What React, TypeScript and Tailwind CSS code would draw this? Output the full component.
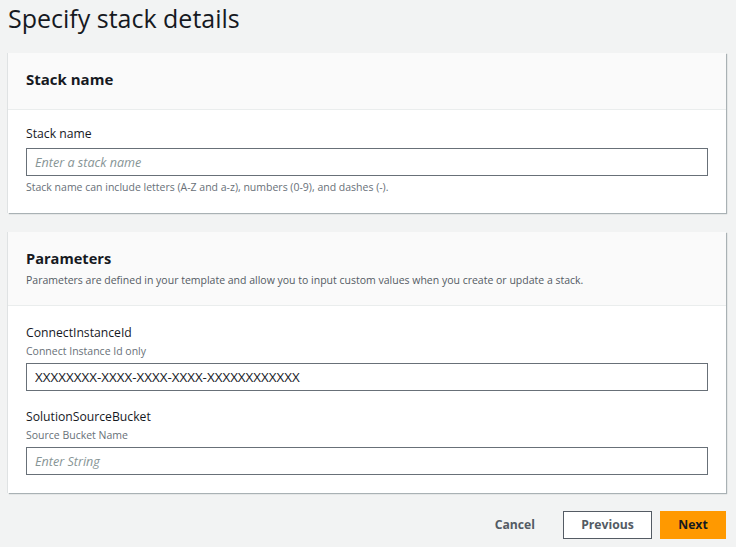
import React from 'react';

const font = { fontFamily: '"Open Sans", "Noto Sans", Arial, sans-serif' };

function Field({ label, hint, placeholder, value }: { label: string; hint?: string; placeholder?: string; value?: string }) {
  return (
    <div>
      <div className="text-[12.2px] leading-[20px] text-[#16191f]">{label}</div>
      {hint && <div className="text-[10.5px] leading-[16px] text-[#687078]">{hint}</div>}
      <input
        readOnly
        defaultValue={value}
        placeholder={placeholder}
        className="mt-[4px] block h-[28px] w-full border border-[#687078] bg-white px-[8px] text-[13.4px] text-[#16191f] outline-none placeholder:text-[12.6px] placeholder:italic placeholder:text-[#879596]"
        style={font}
      />
    </div>
  );
}

export default function App() {
  return (
    <div className="min-h-[547px] w-[736px] bg-[#f2f3f3] px-[8px]" style={font}>
      <h1 className="pt-[2px] text-[25px] leading-[32px] text-[#16191f]">Specify stack details</h1>

      <section className="mt-[19px] mr-[2px] bg-white shadow-[1px_1px_1px_0_rgba(0,28,36,0.3),-1px_0_0_0_rgba(0,28,36,0.08)]">
        <div className="h-[57px] border-b border-[#eaeded] bg-[#fafafa] px-[18px] pt-[15px]">
          <h2 className="text-[15px] font-bold leading-[22px] text-[#16191f]">Stack name</h2>
        </div>
        <div className="px-[18px] pt-[14px] pb-[18px]">
          <Field label="Stack name" placeholder="Enter a stack name" />
          <div className="mt-[3px] text-[10.5px] leading-[16px] text-[#687078]">
            Stack name can include letters (A-Z and a-z), numbers (0-9), and dashes (-).
          </div>
        </div>
      </section>

      <section className="mt-[19px] mr-[2px] bg-white shadow-[1px_1px_1px_0_rgba(0,28,36,0.3),-1px_0_0_0_rgba(0,28,36,0.08)]">
        <div className="h-[74px] border-b border-[#eaeded] bg-[#fafafa] px-[18px] pt-[15px]">
          <h2 className="text-[14.6px] font-bold leading-[22px] text-[#16191f]">Parameters</h2>
          <p className="mt-[3px] text-[10.5px] leading-[16px] text-[#545b64]">
            Parameters are defined in your template and allow you to input custom values when you create or update a stack.
          </p>
        </div>
        <div className="flex flex-col gap-[16px] px-[18px] pt-[17px] pb-[18px]">
          <Field label="ConnectInstanceId" hint="Connect Instance Id only" value="XXXXXXXX-XXXX-XXXX-XXXX-XXXXXXXXXXXX" />
          <Field label="SolutionSourceBucket" hint="Source Bucket Name" placeholder="Enter String" />
        </div>
      </section>

      <div className="mt-[18px] mr-[2px] flex items-center justify-end gap-[8px] pb-[8px]">
        <button className="h-[28px] px-[20px] text-[12.2px] font-bold text-[#545b64]">Cancel</button>
        <button className="h-[28px] w-[89px] border border-[#545b64] bg-white text-[12.2px] font-bold text-[#545b64]">Previous</button>
        <button className="h-[28px] w-[66px] bg-[#ff9900] text-[12.2px] font-bold text-[#16191f]">Next</button>
      </div>
    </div>
  );
}
